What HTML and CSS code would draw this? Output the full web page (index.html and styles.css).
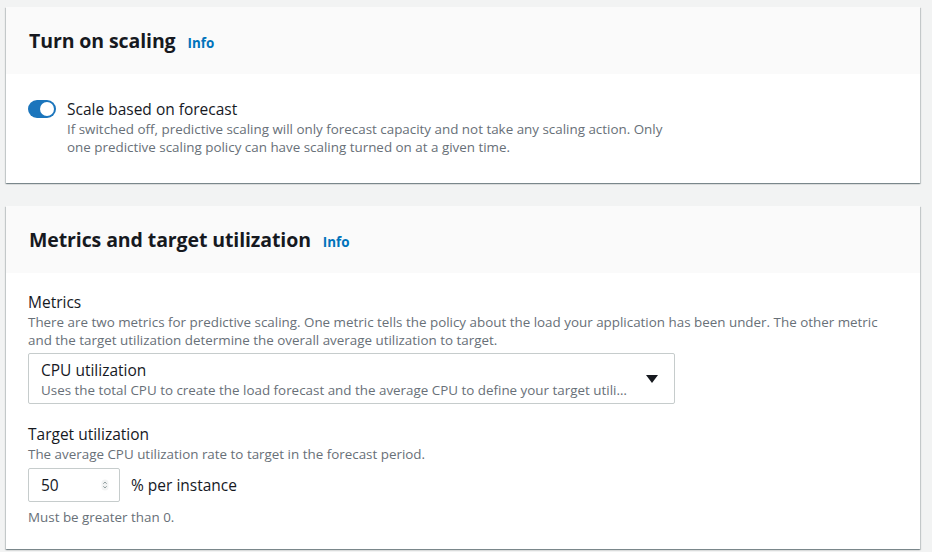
FILE: index.html
```html
<!DOCTYPE html>
<html>
<head>
<meta charset="utf-8">
<link rel="stylesheet" href="styles.css">
</head>
<body>
<div class="page">
  <section class="card">
    <header class="card-head">
      <h2 class="title">Turn on scaling</h2>
      <span class="info">Info</span>
    </header>
    <div class="card-body body-1">
      <div class="toggle-row">
        <span class="toggle"><span class="knob"></span></span>
        <div class="toggle-text">
          <div class="label">Scale based on forecast</div>
          <div class="desc">If switched off, predictive scaling will only forecast capacity and not take any scaling action. Only<br>one predictive scaling policy can have scaling turned on at a given time.</div>
        </div>
      </div>
    </div>
  </section>

  <section class="card">
    <header class="card-head">
      <h2 class="title">Metrics and target utilization</h2>
      <span class="info">Info</span>
    </header>
    <div class="card-body body-2">
      <div class="label">Metrics</div>
      <div class="desc">There are two metrics for predictive scaling. One metric tells the policy about the load your application has been under. The other metric<br>and the target utilization determine the overall average utilization to target.</div>
      <div class="select">
        <div class="select-text">
          <div class="opt">CPU utilization</div>
          <div class="opt-desc">Uses the total CPU to create the load forecast and the average CPU to define your target utili…</div>
        </div>
        <svg class="caret" width="14" height="10" viewBox="0 0 14 10"><path d="M1 1 H13 L7 9 Z" fill="#16191f"/></svg>
      </div>
      <div class="label label-gap">Target utilization</div>
      <div class="desc">The average CPU utilization rate to target in the forecast period.</div>
      <div class="input-row">
        <div class="num-input">
          <span>50</span>
          <svg class="spin" width="8" height="12" viewBox="0 0 8 12"><rect x="0.5" y="0.5" width="7" height="11" rx="3.5" fill="#f2f3f3"/><path d="M2.3 4.8 L4 3 L5.7 4.8 M2.3 7.2 L4 9 L5.7 7.2" fill="none" stroke="#879596" stroke-width="0.9"/></svg>
        </div>
        <span class="unit">% per instance</span>
      </div>
      <div class="desc hint">Must be greater than 0.</div>
    </div>
  </section>
</div>
</body>
</html>
```

FILE: styles.css
```css
* { box-sizing: border-box; }
html, body { margin: 0; padding: 0; }
body {
  background: #f2f3f3;
  font-family: "Open Sans", "Noto Sans", sans-serif;
  color: #16191f;
  width: 932px;
  height: 552px;
  overflow: hidden;
}
.page {
  padding: 7px 12px 0 6px;
  display: flex;
  flex-direction: column;
  gap: 23px;
}
.card {
  background: #fff;
  box-shadow: 0 1px 1px 0 rgba(0,28,36,0.3), 1px 1px 1px 0 rgba(0,28,36,0.15), -1px 1px 1px 0 rgba(0,28,36,0.15);
}
.card-head {
  background: #fafafa;
  height: 67px;
  padding: 0 23px;
  display: flex;
  align-items: center;
  gap: 12px;
}
.title {
  margin: 0;
  font-size: 19.5px;
  font-weight: 700;
  letter-spacing: -0.1px;
}
.info {
  color: #0073bb;
  font-size: 13.4px;
  font-weight: 700;
  padding-top: 4px;
}
.card-body { padding: 0 22px; }
.body-1 { height: 109px; padding-top: 24px; }
.body-2 { padding-top: 18px; padding-bottom: 23px; }
.toggle-row { display: flex; gap: 11px; }
.toggle {
  width: 28px;
  height: 18px;
  border-radius: 9px;
  background: #1b75bc;
  margin-top: 2px;
  position: relative;
  flex: none;
}
.knob {
  position: absolute;
  right: 2px;
  top: 2px;
  width: 14px;
  height: 14px;
  border-radius: 50%;
  background: #fff;
}
.label { font-size: 15.5px; line-height: 22px; }
.desc { font-size: 13.4px; line-height: 18px; color: #687078; }
.select {
  margin-top: 4px;
  width: 647px;
  height: 51px;
  border: 1px solid #c6cccc;
  border-radius: 2px;
  padding: 5px 12px;
  display: flex;
  align-items: center;
  justify-content: space-between;
}
.opt { font-size: 15.5px; line-height: 22px; }
.opt-desc { font-size: 13.4px; line-height: 18px; color: #687078; }
.caret { margin-right: 3px; }
.label-gap { margin-top: 19px; }
.input-row {
  margin-top: 5px;
  display: flex;
  align-items: center;
  gap: 11px;
}
.num-input {
  width: 92px;
  height: 34px;
  border: 1px solid #c6cccc;
  border-radius: 2px;
  padding: 0 12px;
  display: flex;
  align-items: center;
  justify-content: space-between;
  font-size: 15.5px;
}
.spin { margin-right: -2px; }
.unit { font-size: 15.5px; }
.hint { margin-top: 6px; }
```
